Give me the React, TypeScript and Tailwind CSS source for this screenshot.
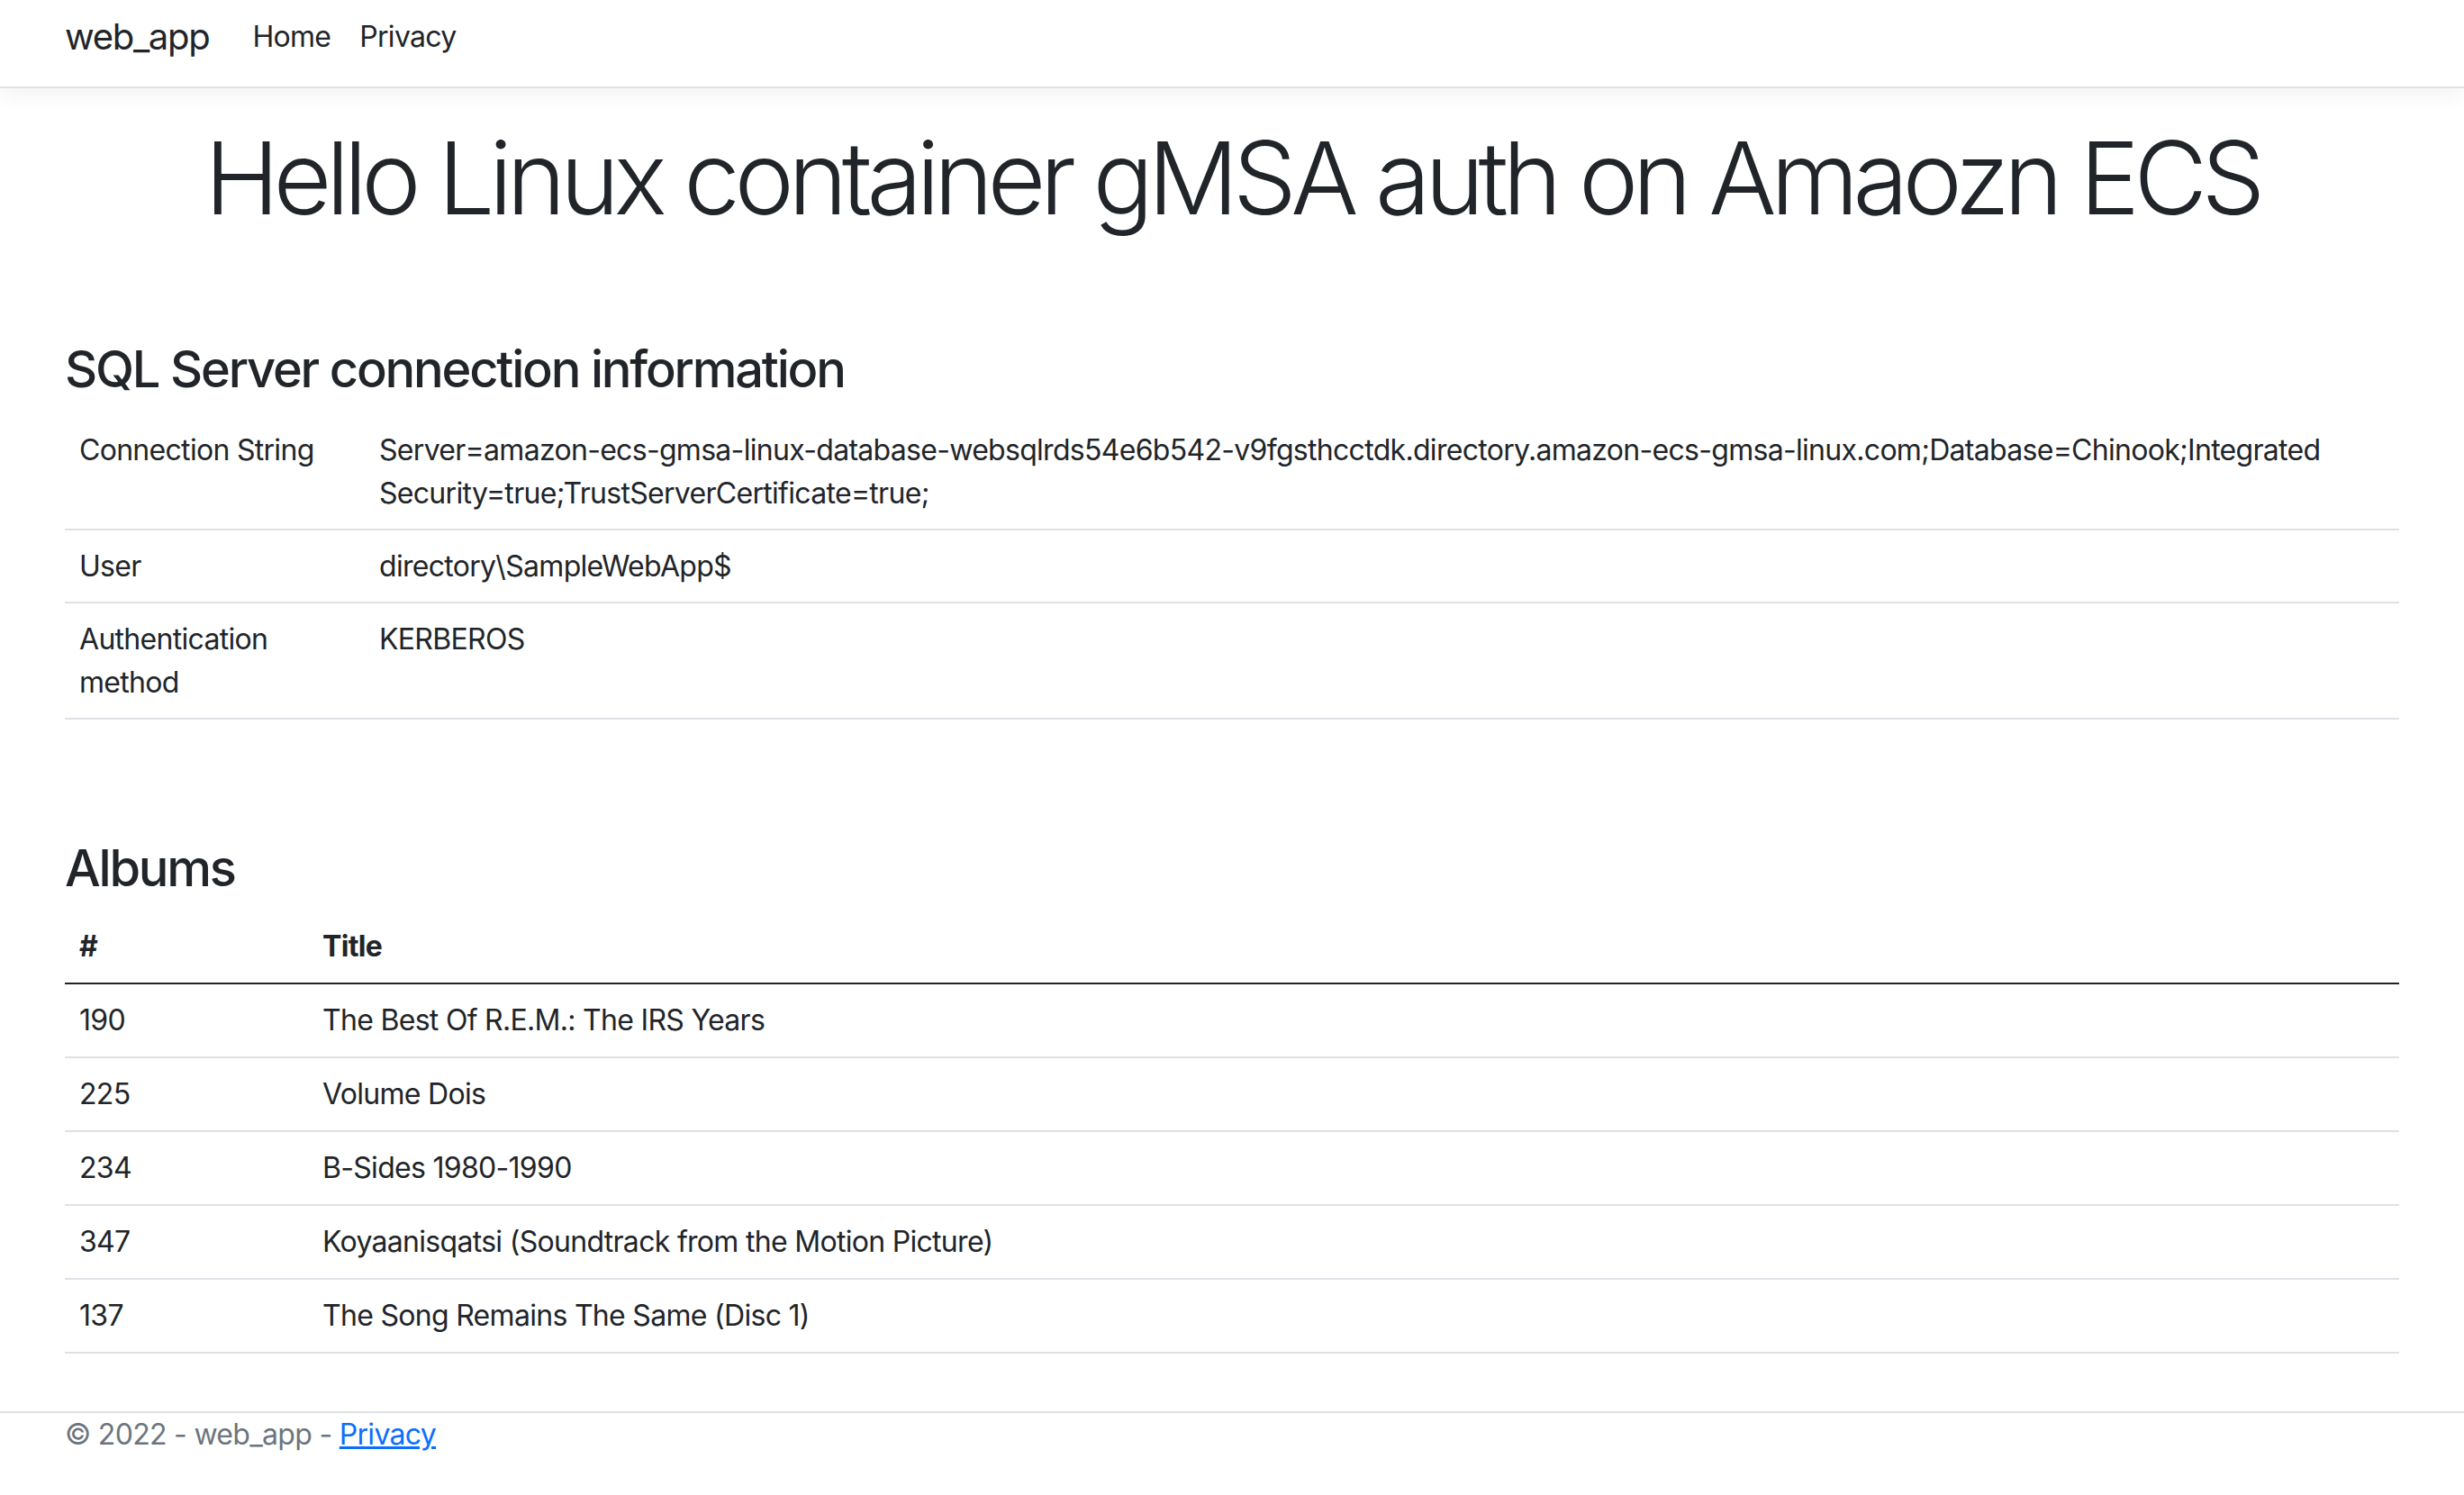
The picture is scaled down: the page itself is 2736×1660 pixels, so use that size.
import React from 'react';

const connection = [
  {
    label: 'Connection String',
    value:
      'Server=amazon-ecs-gmsa-linux-database-websqlrds54e6b542-v9fgsthcctdk.directory.amazon-ecs-gmsa-linux.com;Database=Chinook;Integrated Security=true;TrustServerCertificate=true;',
  },
  { label: 'User', value: 'directory\\SampleWebApp$' },
  { label: 'Authentication method', value: 'KERBEROS' },
];

const albums = [
  { id: 190, title: 'The Best Of R.E.M.: The IRS Years' },
  { id: 225, title: 'Volume Dois' },
  { id: 234, title: 'B-Sides 1980-1990' },
  { id: 347, title: 'Koyaanisqatsi (Soundtrack from the Motion Picture)' },
  { id: 137, title: 'The Song Remains The Same (Disc 1)' },
];

export default function App() {
  return (
    <div className="min-h-screen bg-white text-[#212529] font-['Inter',sans-serif] text-[32px] leading-[48px] tracking-[-0.7px]">
      {/* navbar */}
      <header className="h-[98px] border-b-2 border-[#dee2e6] shadow-[0_8px_24px_rgba(0,0,0,0.05)]">
        <nav className="flex items-start px-[72px]">
          <a href="#" className="mt-[11px] mr-8 text-[40px] leading-[60px] tracking-[-1.3px]">
            web_app
          </a>
          <a href="#" className="mt-[17px] px-4">
            Home
          </a>
          <a href="#" className="mt-[17px] px-4">
            Privacy
          </a>
        </nav>
      </header>

      <main className="px-[72px] pt-8 pb-8">
        <h1 className="mb-4 text-center text-[112px] leading-[134px] font-light tracking-[-6.5px]">
          Hello Linux container gMSA auth on Amaozn ECS
        </h1>

        <h3 className="mt-[113px] mb-4 text-[56px] leading-[67px] font-medium tracking-[-2.2px]">
          SQL Server connection information
        </h3>
        <table className="w-full table-fixed border-collapse mb-8">
          <tbody>
            {connection.map(row => (
              <tr key={row.label} className="border-b-2 border-[#dee2e6]">
                <td className="w-[333px] px-4 pt-4 pb-[15px] align-top">{row.label}</td>
                <td className="px-4 pt-4 pb-[15px] align-top">{row.value}</td>
              </tr>
            ))}
          </tbody>
        </table>

        <h3 className="mt-[132px] mb-[13px] text-[56px] leading-[67px] font-medium tracking-[-2.2px]">
          Albums
        </h3>
        <table className="w-full table-fixed border-collapse mb-8">
          <thead>
            <tr className="border-b-2 border-[#212529]">
              <th className="w-[270px] p-4 text-left font-bold">#</th>
              <th className="p-4 text-left font-bold">Title</th>
            </tr>
          </thead>
          <tbody>
            {albums.map(a => (
              <tr key={a.id} className="border-b-2 border-[#dee2e6]">
                <td className="p-4">{a.id}</td>
                <td className="p-4">{a.title}</td>
              </tr>
            ))}
          </tbody>
        </table>
      </main>

      <footer className="border-t-2 border-[#dee2e6] px-[72px] pb-[40px] text-[#6c757d] whitespace-nowrap">
        © 2022 - web_app -{' '}
        <a href="#" className="text-[#0d6efd] underline">
          Privacy
        </a>
      </footer>
    </div>
  );
}
